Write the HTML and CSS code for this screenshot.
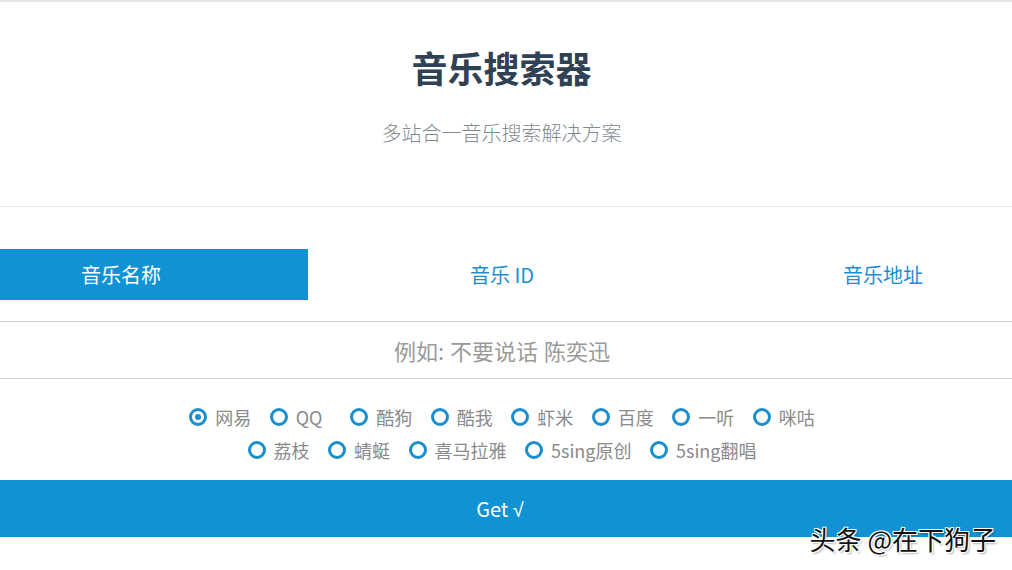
FILE: index.html
```html
<!DOCTYPE html>
<html lang="zh-CN">
<head>
<meta charset="utf-8">
<title>音乐搜索器</title>
<link rel="stylesheet" href="styles.css">
</head>
<body>
<div class="page">
  <header class="hero">
    <h1 class="title">音乐搜索器</h1>
    <p class="subtitle">多站合一音乐搜索解决方案</p>
  </header>
  <nav class="tabs">
    <div class="tab tab-one active">音乐名称</div>
    <div class="tab tab-two">音乐 ID</div>
    <div class="tab tab-three">音乐地址</div>
  </nav>
  <div class="search">
    <input class="search-input" type="text" placeholder="例如: 不要说话 陈奕迅">
  </div>
  <div class="sources">
    <label class="source"><span class="radio checked"></span><span class="label">网易</span></label>
    <label class="source"><span class="radio"></span><span class="label">QQ</span></label>
    <label class="source"><span class="radio"></span><span class="label">酷狗</span></label>
    <label class="source"><span class="radio"></span><span class="label">酷我</span></label>
    <label class="source"><span class="radio"></span><span class="label">虾米</span></label>
    <label class="source"><span class="radio"></span><span class="label">百度</span></label>
    <label class="source"><span class="radio"></span><span class="label">一听</span></label>
    <label class="source"><span class="radio"></span><span class="label">咪咕</span></label>
    <label class="source"><span class="radio"></span><span class="label">荔枝</span></label>
    <label class="source"><span class="radio"></span><span class="label">蜻蜓</span></label>
    <label class="source"><span class="radio"></span><span class="label">喜马拉雅</span></label>
    <label class="source"><span class="radio"></span><span class="label">5sing原创</span></label>
    <label class="source"><span class="radio"></span><span class="label">5sing翻唱</span></label>
  </div>
  <button class="get-btn" type="button">Get <span class="check">√</span></button>
  <div class="watermark">头条 @在下狗子</div>
</div>
</body>
</html>
```
FILE: styles.css
```css
html, body {
  margin: 0;
  padding: 0;
  background: #fff;
}
body {
  font-family: "Noto Sans CJK SC", "Noto Sans", sans-serif;
  width: 1012px;
  height: 570px;
  overflow: hidden;
}
.page {
  position: relative;
  height: 570px;
  border-top: 2px solid #e6e6e6;
  box-sizing: border-box;
}
.hero {
  text-align: center;
  height: 205px;
  border-bottom: 1px solid #ececec;
  padding: 41px 9px 0 0;
  box-sizing: border-box;
}
.title {
  margin: 0;
  font-size: 36px;
  line-height: 48px;
  font-weight: 700;
  color: #2f4154;
}
.subtitle {
  margin: 28px 0 0;
  font-size: 20px;
  line-height: 28px;
  color: #7f8a8f;
  font-weight: 300;
}
.tabs {
  display: grid;
  grid-template-columns: 308px 388px 1fr;
  height: 51px;
  margin-top: 42px;
}
.tab {
  display: flex;
  align-items: center;
  justify-content: center;
  font-size: 20px;
  color: #1a8fd0;
}
.tab-one { padding-right: 66px; }
.tab-three { padding-left: 58px; }
.tab.active {
  background: #1192d3;
  color: #fff;
}
.search {
  margin-top: 21px;
  border-top: 1px solid #cfcfcf;
  border-bottom: 1px solid #cfcfcf;
  height: 56px;
}
.search-input {
  display: block;
  width: 100%;
  height: 56px;
  border: 0;
  outline: none;
  text-align: center;
  font-family: "Noto Sans CJK SC", "Noto Sans", sans-serif;
  font-size: 22px;
  word-spacing: 1px;
  padding: 0 8px 0 0;
  box-sizing: border-box;
  background: transparent;
}
.search-input::placeholder {
  color: #9a9a9a;
}
.sources {
  display: flex;
  flex-wrap: wrap;
  justify-content: center;
  column-gap: 18.5px;
  max-width: 700px;
  margin: 21px auto 0;
  padding-right: 8px;
  box-sizing: border-box;
}
.source {
  display: flex;
  align-items: center;
  height: 33px;
  gap: 8px;
  font-size: 18px;
  color: #8a8a8a;
}
.label {
  min-width: 36px;
}
.radio {
  width: 12px;
  height: 12px;
  border: 3px solid #1a8fd0;
  border-radius: 50%;
  position: relative;
  flex: none;
}
.radio.checked::after {
  content: "";
  position: absolute;
  left: 3px;
  top: 3px;
  width: 6px;
  height: 6px;
  border-radius: 50%;
  background: #1a8fd0;
}
.get-btn {
  display: block;
  width: 100%;
  height: 57px;
  margin-top: 14px;
  border: 0;
  background: #1192d3;
  color: #fff;
  font-family: "Noto Sans CJK SC", "Noto Sans", sans-serif;
  font-size: 20px;
  padding: 0 12px 0 0;
}
.check {
  font-family: "Liberation Sans", sans-serif;
}
.watermark {
  position: absolute;
  right: 16px;
  top: 518px;
  font-size: 26px;
  color: #111;
  text-shadow: 1px 1px 0 #fff, -1px -1px 0 #fff, 1px -1px 0 #fff, -1px 1px 0 #fff, 2px 2px 2px rgba(0,0,0,0.3);
}
```
